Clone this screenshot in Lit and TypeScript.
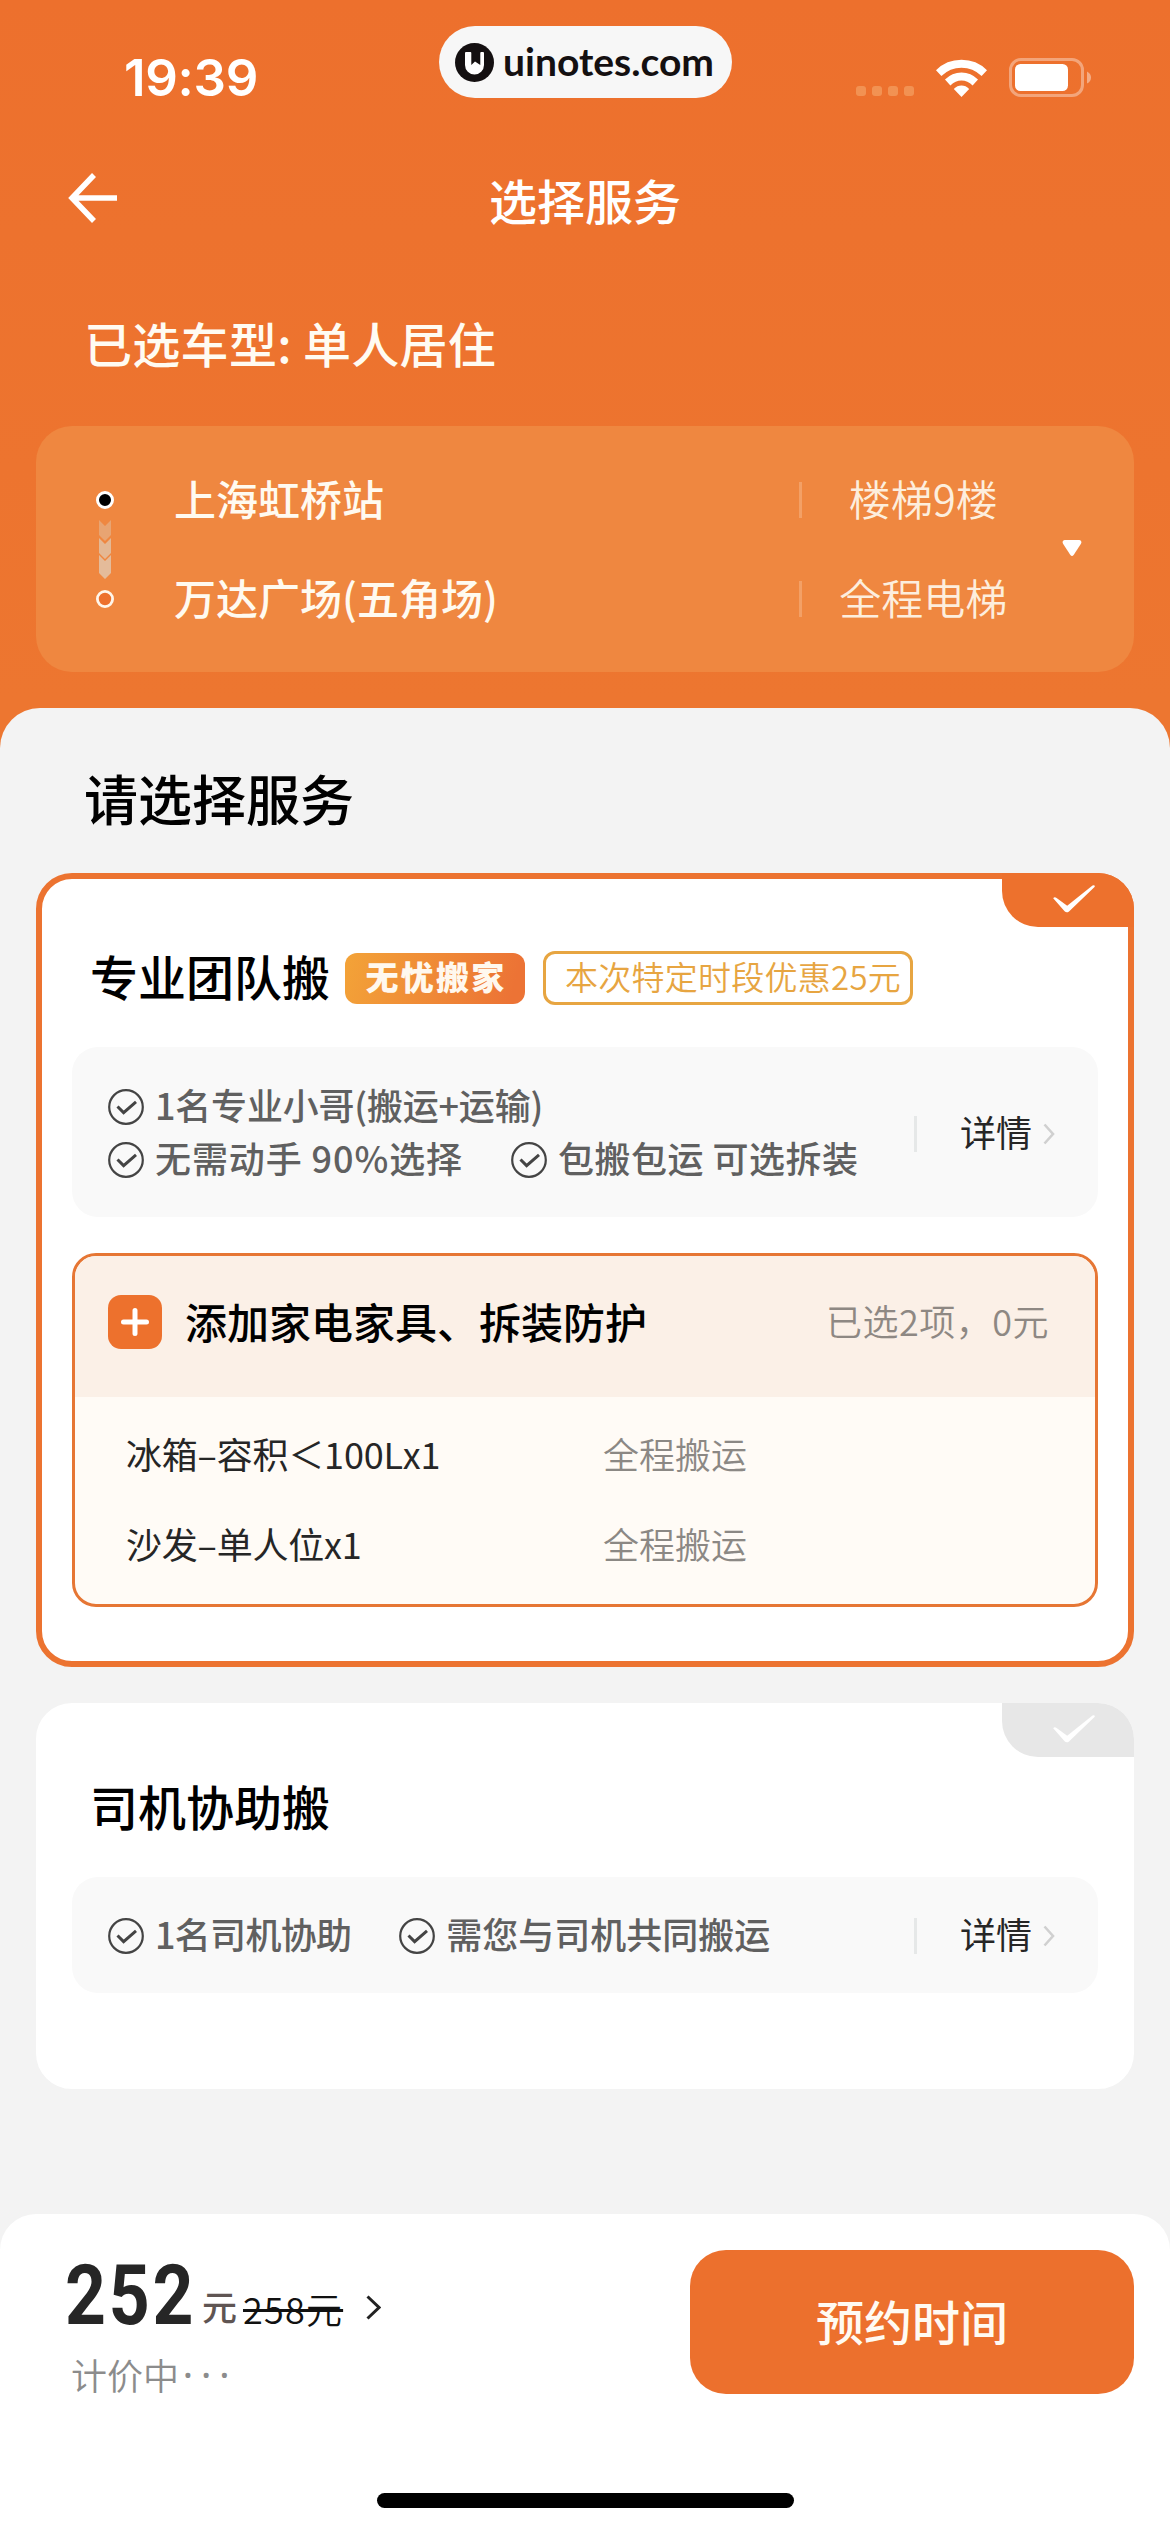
import { LitElement, html, css, svg, nothing, TemplateResult } from "lit";
import { customElement, property } from "lit/decorators.js";
import { classMap } from "lit/directives/class-map.js";

interface Feature {
  text: string;
  cls: string;
}

interface ExtraItem {
  name: string;
  scope: string;
}

const chevron = (cls: string, w: number, h: number, stroke: number): TemplateResult => html`
  <svg class=${cls} width=${w} height=${h} viewBox="0 0 ${w} ${h}" fill="none">
    <path d="M1.5 1.5 L${w - 2} ${h / 2} L1.5 ${h - 1.5}" stroke="currentColor" stroke-width=${stroke} />
  </svg>
`;

const circleCheck = (): TemplateResult => html`
  <svg class="tick" width="36" height="36" viewBox="0 0 36 36" fill="none" stroke="currentColor">
    <circle cx="18" cy="18" r="16.8" stroke-width="2.2" />
    <path d="M9.5 17.5 L15.6 23.6 L28 12.8" stroke-width="3" />
  </svg>
`;

@customElement("service-card")
export class ServiceCard extends LitElement {
  @property() heading = "";
  @property({ type: Boolean }) selected = false;
  @property() badge = "";
  @property() promo = "";
  @property({ attribute: false }) rows: Feature[][] = [];

  static styles = css`
    :host {
      display: block;
    }
    .card {
      position: relative;
      box-sizing: border-box;
      border: 6px solid #fff;
      border-radius: 36px;
      background: #fff;
      padding: 74px 30px 54px;
      min-height: 386px;
    }
    .card.on {
      border-color: #ec7330;
    }
    .corner {
      position: absolute;
      top: -6px;
      right: -6px;
      width: 132px;
      height: 54px;
      border-radius: 0 36px 0 36px;
      background: #e7e7e7;
      display: flex;
      align-items: center;
      justify-content: center;
    }
    .on .corner {
      background: #ed712d;
    }
    .corner svg {
      margin: -3px 0 0 12px;
    }
    .head {
      display: flex;
      align-items: center;
      height: 54px;
      margin: -2px 0 42px 18px;
    }
    .heading {
      font-size: 48px;
      font-weight: 500;
      line-height: 54px;
      color: #000;
      margin-top: -6px;
    }
    .badge {
      box-sizing: border-box;
      width: 180px;
      height: 51px;
      margin-left: 15px;
      border-radius: 12px;
      background: linear-gradient(105deg, #f3a338, #ec7335 92%);
      color: #fff8ee;
      font-size: 33px;
      font-weight: 900;
      line-height: 47px;
      letter-spacing: 2.2px;
      text-indent: 2px;
      text-align: center;
    }
    .promo {
      box-sizing: border-box;
      width: 370px;
      height: 54px;
      margin-left: 18px;
      padding-left: 19px;
      border: 3px solid #e7a541;
      border-radius: 12px;
      color: #e7a541;
      font-size: 33px;
      font-weight: 350;
      line-height: 44px;
      letter-spacing: 0.25px;
      white-space: nowrap;
    }
    .features {
      box-sizing: border-box;
      display: flex;
      align-items: center;
      justify-content: space-between;
      min-height: 116px;
      padding: 32px 43px 31px 36px;
      border-radius: 26px;
      background: #f9f9f9;
    }
    .on .features {
      min-height: 170px;
      padding: 33px 43px 30px 36px;
    }
    .line {
      display: flex;
      height: 53px;
      align-items: center;
      gap: 48px;
    }
    .item {
      display: flex;
      align-items: center;
      gap: 11px;
      font-size: 36px;
      font-weight: 500;
      line-height: 53px;
      color: #606060;
      white-space: pre;
    }
    .item span {
      margin-top: -5px;
    }
    .item .spread {
      letter-spacing: 0.9px;
    }
    .item .loose {
      letter-spacing: 0.5px;
    }
    .item .tight {
      letter-spacing: -0.7px;
    }
    .item .snug {
      letter-spacing: -0.2px;
    }
    .tick {
      color: #444;
      flex: none;
    }
    .detail {
      display: flex;
      align-items: center;
      font-size: 36px;
      line-height: 48px;
      color: #262626;
    }
    .detail::before {
      content: "";
      width: 3px;
      height: 36px;
      background: #e6e8e8;
      margin-right: 43px;
    }
    .detail span {
      margin-top: -5px;
    }
    .more {
      color: #d0d0d0;
      margin-left: 11px;
    }
  `;

  render() {
    return html`
      <section class=${classMap({ card: true, on: this.selected })}>
        <div class="corner">
          <svg width="44" height="30" viewBox="0 0 44 30">
            <path d="M1.2 14.2 Q2.5 12.6 4.6 14 L15.2 21.8 L40.5 1.6 Q43 .8 42.8 2.8 L17 27.4 Q14.6 29.4 12.6 27.2 Z" fill="#fff" />
          </svg>
        </div>
        <div class="head">
          <span class="heading">${this.heading}</span>
          ${this.badge ? html`<span class="badge">${this.badge}</span>` : nothing}
          ${this.promo ? html`<span class="promo">${this.promo}</span>` : nothing}
        </div>
        <div class="features">
          <div>
            ${this.rows.map(
              (row) => html`<div class="line">
                ${row.map((f) => html`<div class="item">${circleCheck()}<span class=${f.cls}>${f.text}</span></div>`)}
              </div>`
            )}
          </div>
          <div class="detail"><span>详情</span>${chevron("more", 12, 22, 2.6)}</div>
        </div>
        <slot></slot>
      </section>
    `;
  }
}

@customElement("app-root")
export class AppRoot extends LitElement {
  private proRows: Feature[][] = [
    [{ text: "1名专业小哥(搬运+运输)", cls: "snug" }],
    [
      { text: "无需动手 90%选择", cls: "spread" },
      { text: "包搬包运 可选拆装", cls: "loose" },
    ],
  ];

  private driverRows: Feature[][] = [
    [
      { text: "1名司机协助", cls: "tight" },
      { text: "需您与司机共同搬运", cls: "" },
    ],
  ];

  private extras: ExtraItem[] = [
    { name: "冰箱–容积＜100Lx1", scope: "全程搬运" },
    { name: "沙发–单人位x1", scope: "全程搬运" },
  ];

  static styles = css`
    :host {
      display: block;
      width: 1170px;
      height: 2532px;
      overflow: hidden;
      font-family: "Noto Sans CJK SC", "Noto Sans", sans-serif;
      color: #000;
    }
    .page {
      display: flex;
      flex-direction: column;
      height: 2532px;
      background: linear-gradient(#ed702d, #ed7630 700px);
    }
    .status {
      display: grid;
      grid-template-columns: 439px 293px 1fr;
      height: 124px;
    }
    .clock {
      padding: 46px 0 0 124px;
      font: 600 51px/64px Inter, sans-serif;
      color: #fff;
      letter-spacing: -0.3px;
    }
    .pill {
      box-sizing: border-box;
      display: flex;
      align-items: center;
      gap: 9px;
      height: 72px;
      margin-top: 26px;
      padding-left: 16px;
      border-radius: 36px;
      background: #f7f7f7;
      color: #141011;
      font: 700 39px/50px Lato, sans-serif;
    }
    .pill span {
      margin-top: -3px;
    }
    .signals {
      display: flex;
      align-items: flex-end;
      height: 97px;
      padding-left: 124px;
    }
    .cell {
      width: 10px;
      height: 10px;
      margin: 0 6px 1px 0;
      border-radius: 3px;
      background: rgba(255, 222, 170, 0.3);
    }
    .wifi {
      margin-left: 16px;
    }
    .battery {
      margin-left: 22px;
    }
    .nav {
      display: grid;
      grid-template-columns: 160px 1fr 160px;
      align-items: center;
      height: 150px;
    }
    .back {
      margin-left: 67px;
      margin-top: -2px;
    }
    .title {
      font-size: 48px;
      line-height: 60px;
      font-weight: 500;
      color: #fff;
      text-align: center;
    }
    .vehicle {
      height: 152px;
      box-sizing: border-box;
      padding: 38px 0 0 84px;
      font-size: 48px;
      line-height: 60px;
      color: #fffbf2;
      font-weight: 500;
      white-space: pre;
      letter-spacing: 0.3px;
    }
    .route {
      box-sizing: border-box;
      display: grid;
      grid-template-columns: 18px 685px 246px 1fr;
      height: 246px;
      margin: 0 36px;
      padding-left: 60px;
      border-radius: 36px;
      background: #ef8740;
    }
    .track {
      padding-top: 65px;
    }
    .places,
    .access {
      padding-top: 22px;
      font-size: 42px;
      line-height: 99px;
      white-space: nowrap;
    }
    .places {
      padding-left: 60px;
      color: #fffaf0;
      font-weight: 500;
    }
    .access {
      font-weight: 350;
      color: #fdeedd;
    }
    .access div {
      display: flex;
      align-items: center;
      height: 99px;
    }
    .access div::before {
      content: "";
      width: 2.5px;
      height: 36px;
      margin-top: 5px;
      background: #f3a066;
    }
    .stop {
      text-align: center;
      flex: 1;
    }
    .caret {
      margin: 114px 0 0 17px;
    }
    .sheet {
      flex: 1;
      box-sizing: border-box;
      display: flex;
      flex-direction: column;
      margin-top: 36px;
      border-radius: 40px 40px 0 0;
      background: #f3f3f3;
    }
    .pick {
      margin: 56px 0 0 84px;
      height: 109px;
      font-size: 54px;
      line-height: 67px;
      font-weight: 500;
    }
    .list {
      flex: 1;
      display: flex;
      flex-direction: column;
      gap: 36px;
      margin: 0 36px;
    }
    .extras {
      margin-top: 36px;
      border: 3px solid #e67634;
      border-radius: 24px;
      overflow: hidden;
      background: #fffbf6;
      height: 348px;
    }
    .extras-head {
      display: flex;
      align-items: center;
      box-sizing: border-box;
      height: 141px;
      padding: 0 46px 9px 33px;
      background: #fbf0e7;
    }
    .extras-title {
      flex: 1;
      margin: -3px 0 0 23px;
      font-size: 42px;
      font-weight: 500;
      line-height: 54px;
    }
    .extras-sum {
      font-size: 36px;
      font-weight: 350;
      color: #8e8883;
      line-height: 48px;
      margin-top: -4px;
      letter-spacing: 0.5px;
    }
    .extras-body {
      padding-top: 11px;
    }
    .extra {
      display: grid;
      grid-template-columns: 477px 1fr;
      height: 90px;
      padding-left: 51px;
      font-size: 36px;
      line-height: 90px;
      color: #262626;
    }
    .name {
      letter-spacing: -0.2px;
    }
    .scope {
      color: #8b8884;
      font-weight: 350;
    }
    .bar {
      box-sizing: border-box;
      display: grid;
      grid-template-columns: 1fr 444px;
      grid-template-rows: 144px 1fr;
      height: 318px;
      padding: 36px 36px 24px 65px;
      border-radius: 36px 36px 0 0;
      background: #fff;
    }
    .price {
      display: flex;
      align-items: baseline;
      height: 96px;
      margin-top: -2px;
      white-space: nowrap;
    }
    .amount {
      width: 131px;
      font: 700 83px/96px Roboto, sans-serif;
      letter-spacing: 3.2px;
      transform: scaleX(0.86);
      transform-origin: left;
      color: #262626;
    }
    .unit {
      font-size: 35px;
      font-weight: 500;
      color: #5f5553;
      margin-left: 6px;
      transform: translateY(-3px);
    }
    .was {
      font-size: 36px;
      font-weight: 350;
      color: #111;
      margin-left: 6px;
      letter-spacing: 1.2px;
      text-decoration: line-through;
      text-decoration-thickness: 3px;
    }
    .go {
      color: #222;
      margin-left: 23px;
      transform: translateY(-4px);
    }
    .state {
      display: flex;
      align-items: center;
      padding-left: 6px;
      font-size: 36px;
      font-weight: 350;
      line-height: 48px;
      color: #8c8c8c;
      margin-top: 4px;
    }
    .dots {
      font-family: "Noto Sans", sans-serif;
      font-weight: 500;
      letter-spacing: 8.4px;
      margin: 3px 0 0 4px;
    }
    .book {
      border: 0;
      border-radius: 36px;
      background: #ec702d;
      color: #fffaf2;
      font: 500 48px/60px "Noto Sans CJK SC", sans-serif;
      padding: 0 0 5px;
    }
    .home {
      grid-column: 1 / 3;
      justify-self: center;
      align-self: end;
      width: 417px;
      height: 15px;
      border-radius: 8px;
      background: #000;
      margin-right: 29px;
    }
  `;

  private arrowStep(y: number, h: number, opacity: number) {
    return svg`<path d="M0 ${y} L6 ${y + 6} L12 ${y} V${y + h - 6} L6 ${y + h} L0 ${y + h - 6} Z" fill="#dfd0bd" fill-opacity=${opacity} />`;
  }

  render() {
    return html`
      <main class="page">
        <div class="status">
          <div class="clock">19:39</div>
          <div class="pill">
            <svg width="39" height="39" viewBox="0 0 39 39">
              <circle cx="19.5" cy="19.5" r="19.5" fill="#141011" />
              <path d="M10 10 Q10 9 11 9 H15.5 Q16.3 9 16.3 10 V22 L20 18.5 L25.3 22 V10 Q25.3 9 26.2 9 H28 Q29 9 29 10 V22 A9.5 9.5 0 0 1 10 22 Z" fill="#fff" />
            </svg>
            <span>uinotes.com</span>
          </div>
          <div class="signals">
            <i class="cell"></i><i class="cell"></i><i class="cell"></i><i class="cell"></i>
            <svg class="wifi" width="51" height="38" viewBox="0 0 51 38" fill="#fff">
              <path d="M0 11.2 Q10.5 .8 25.5 .8 T51 11.2 L45.6 17 Q37 8.8 25.5 8.8 T5.4 17 Z" />
              <path d="M9 20.6 Q16 13.6 25.5 13.6 T42 20.6 L36.6 26.4 Q31.6 21.6 25.5 21.6 T14.4 26.4 Z" />
              <path d="M17.8 30 Q21.2 26.6 25.5 26.6 T33.2 30 L25.5 38 Z" />
            </svg>
            <svg class="battery" width="83" height="39" viewBox="0 0 83 39">
              <rect x="1.5" y="1.5" width="72" height="36" rx="10.5" fill="none" stroke="#fff" stroke-opacity=".37" stroke-width="3" />
              <rect x="6" y="6" width="53" height="27" rx="5.5" fill="#fff" />
              <path d="M78 13.5 Q82 15.5 82 19.5 T78 25.5 Z" fill="#fff" fill-opacity=".42" />
            </svg>
          </div>
        </div>

        <header class="nav">
          <svg class="back" width="52" height="50" viewBox="0 0 52 50" fill="none" stroke="#fff" stroke-width="5.5">
            <path d="M27 2 L5 25 L27 48 M5 25 H50" />
          </svg>
          <div class="title">选择服务</div>
        </header>
        <div class="vehicle">已选车型: 单人居住</div>

        <section class="route">
          <svg class="track" width="18" height="118" viewBox="0 0 18 118">
            <circle cx="9" cy="9" r="7.5" fill="#000" stroke="#fff" stroke-width="3" />
            <g transform="translate(3 29)">
              ${this.arrowStep(0, 21, 0.4)} ${this.arrowStep(18, 21, 0.68)} ${this.arrowStep(35, 24, 0.72)}
            </g>
            <circle cx="9" cy="108" r="7.6" fill="#ed712d" stroke="#fff6ea" stroke-width="2.8" />
          </svg>
          <div class="places">
            <div>上海虹桥站</div>
            <div>万达广场(五角场)</div>
          </div>
          <div class="access">
            <div><span class="stop">楼梯9楼</span></div>
            <div><span class="stop">全程电梯</span></div>
          </div>
          <svg class="caret" width="20" height="17" viewBox="0 0 20 17">
            <path d="M2.5 0 H17.5 Q20.5 .8 18.8 4 L11.8 14.8 Q10 17.2 8.2 14.8 L1.2 4 Q-.5 .8 2.5 0 Z" fill="#fff" />
          </svg>
        </section>

        <section class="sheet">
          <div class="pick">请选择服务</div>
          <div class="list">
            <service-card selected heading="专业团队搬" badge="无忧搬家" promo="本次特定时段优惠25元" .rows=${this.proRows}>
              <div class="extras">
                <div class="extras-head">
                  <svg width="54" height="54" viewBox="0 0 54 54">
                    <rect width="54" height="54" rx="13" fill="#ed712d" />
                    <path d="M27 15.5 V38.5 M15.5 27 H38.5" stroke="#fff" stroke-width="5" stroke-linecap="round" />
                  </svg>
                  <span class="extras-title">添加家电家具、拆装防护</span>
                  <span class="extras-sum">已选2项，0元</span>
                </div>
                <div class="extras-body">
                  ${this.extras.map(
                    (e) => html`<div class="extra"><span class="name">${e.name}</span><span class="scope">${e.scope}</span></div>`
                  )}
                </div>
              </div>
            </service-card>
            <service-card heading="司机协助搬" .rows=${this.driverRows}></service-card>
          </div>
          <footer class="bar">
            <div>
              <div class="price">
                <span class="amount">252</span>
                <span class="unit">元</span>
                <span class="was">258元</span>
                ${chevron("go", 15, 25, 3)}
              </div>
              <div class="state">计价中<span class="dots">···</span></div>
            </div>
            <button class="book">预约时间</button>
            <div class="home"></div>
          </footer>
        </section>
      </main>
    `;
  }
}
